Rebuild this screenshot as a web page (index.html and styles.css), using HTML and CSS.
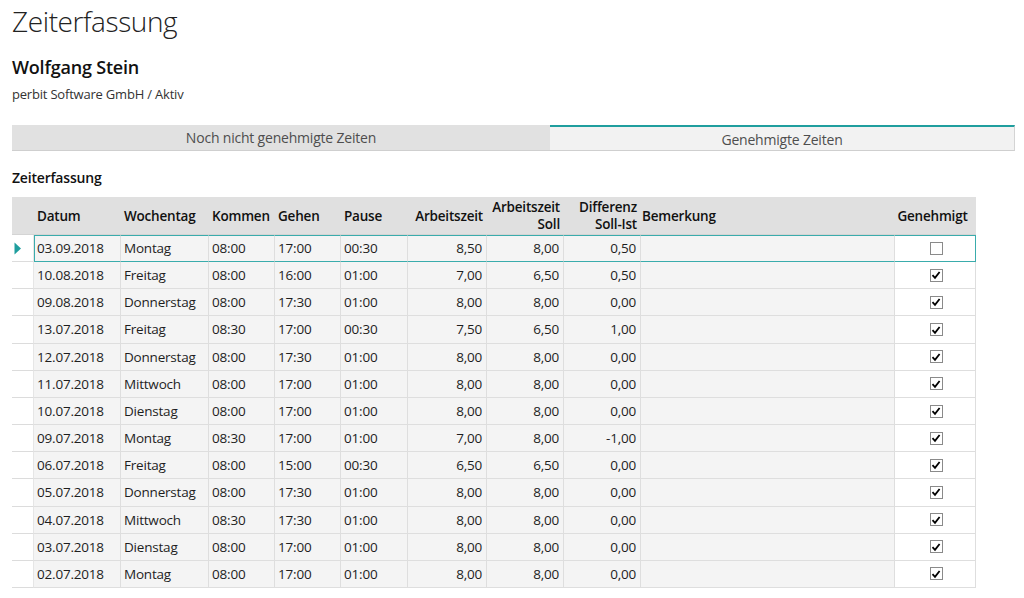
FILE: index.html
```html
<!DOCTYPE html>
<html lang="de">
<head>
<meta charset="utf-8">
<title>Zeiterfassung</title>
<link rel="stylesheet" href="styles.css">
</head>
<body>
<h1 class="title">Zeiterfassung</h1>
<div class="person">Wolfgang Stein</div>
<div class="company">perbit Software GmbH / Aktiv</div>

<div class="tabs">
  <div class="tab">Noch nicht genehmigte Zeiten</div>
  <div class="tab active">Genehmigte Zeiten</div>
</div>

<div class="section">Zeiterfassung</div>

<div class="grid">
  <div class="row head">
    <div class="c ind"></div>
    <div class="c">Datum</div>
    <div class="c">Wochentag</div>
    <div class="c">Kommen</div>
    <div class="c">Gehen</div>
    <div class="c">Pause</div>
    <div class="c num">Arbeitszeit</div>
    <div class="c num two">Arbeitszeit<br>Soll</div>
    <div class="c num two">Differenz<br>Soll-Ist</div>
    <div class="c bem">Bemerkung</div>
    <div class="c ctr">Genehmigt</div>
  </div>

  <div class="row sel">
    <div class="c ind"><svg width="8" height="13" viewBox="0 0 8 13"><path d="M0.5 0.5 L7 6.5 L0.5 12.5 Z" fill="#1f9e9e"/></svg></div>
    <div class="c first">03.09.2018</div><div class="c">Montag</div><div class="c">08:00</div><div class="c">17:00</div><div class="c">00:30</div>
    <div class="c num">8,50</div><div class="c num">8,00</div><div class="c num">0,50</div><div class="c"></div>
    <div class="c ctr chk last"><span class="box"></span></div>
  </div>

  <div class="row"><div class="c ind"></div><div class="c">10.08.2018</div><div class="c">Freitag</div><div class="c">08:00</div><div class="c">16:00</div><div class="c">01:00</div><div class="c num">7,00</div><div class="c num">6,50</div><div class="c num">0,50</div><div class="c"></div><div class="c ctr chk"><span class="box on"><svg width="10" height="10" viewBox="0 0 10 10"><path d="M1.5 5.2 L4 7.8 L8.6 2" fill="none" stroke="#000" stroke-width="1.8"/></svg></span></div></div>
  <div class="row"><div class="c ind"></div><div class="c">09.08.2018</div><div class="c">Donnerstag</div><div class="c">08:00</div><div class="c">17:30</div><div class="c">01:00</div><div class="c num">8,00</div><div class="c num">8,00</div><div class="c num">0,00</div><div class="c"></div><div class="c ctr chk"><span class="box on"><svg width="10" height="10" viewBox="0 0 10 10"><path d="M1.5 5.2 L4 7.8 L8.6 2" fill="none" stroke="#000" stroke-width="1.8"/></svg></span></div></div>
  <div class="row"><div class="c ind"></div><div class="c">13.07.2018</div><div class="c">Freitag</div><div class="c">08:30</div><div class="c">17:00</div><div class="c">00:30</div><div class="c num">7,50</div><div class="c num">6,50</div><div class="c num">1,00</div><div class="c"></div><div class="c ctr chk"><span class="box on"><svg width="10" height="10" viewBox="0 0 10 10"><path d="M1.5 5.2 L4 7.8 L8.6 2" fill="none" stroke="#000" stroke-width="1.8"/></svg></span></div></div>
  <div class="row"><div class="c ind"></div><div class="c">12.07.2018</div><div class="c">Donnerstag</div><div class="c">08:00</div><div class="c">17:30</div><div class="c">01:00</div><div class="c num">8,00</div><div class="c num">8,00</div><div class="c num">0,00</div><div class="c"></div><div class="c ctr chk"><span class="box on"><svg width="10" height="10" viewBox="0 0 10 10"><path d="M1.5 5.2 L4 7.8 L8.6 2" fill="none" stroke="#000" stroke-width="1.8"/></svg></span></div></div>
  <div class="row"><div class="c ind"></div><div class="c">11.07.2018</div><div class="c">Mittwoch</div><div class="c">08:00</div><div class="c">17:00</div><div class="c">01:00</div><div class="c num">8,00</div><div class="c num">8,00</div><div class="c num">0,00</div><div class="c"></div><div class="c ctr chk"><span class="box on"><svg width="10" height="10" viewBox="0 0 10 10"><path d="M1.5 5.2 L4 7.8 L8.6 2" fill="none" stroke="#000" stroke-width="1.8"/></svg></span></div></div>
  <div class="row"><div class="c ind"></div><div class="c">10.07.2018</div><div class="c">Dienstag</div><div class="c">08:00</div><div class="c">17:00</div><div class="c">01:00</div><div class="c num">8,00</div><div class="c num">8,00</div><div class="c num">0,00</div><div class="c"></div><div class="c ctr chk"><span class="box on"><svg width="10" height="10" viewBox="0 0 10 10"><path d="M1.5 5.2 L4 7.8 L8.6 2" fill="none" stroke="#000" stroke-width="1.8"/></svg></span></div></div>
  <div class="row"><div class="c ind"></div><div class="c">09.07.2018</div><div class="c">Montag</div><div class="c">08:30</div><div class="c">17:00</div><div class="c">01:00</div><div class="c num">7,00</div><div class="c num">8,00</div><div class="c num">-1,00</div><div class="c"></div><div class="c ctr chk"><span class="box on"><svg width="10" height="10" viewBox="0 0 10 10"><path d="M1.5 5.2 L4 7.8 L8.6 2" fill="none" stroke="#000" stroke-width="1.8"/></svg></span></div></div>
  <div class="row"><div class="c ind"></div><div class="c">06.07.2018</div><div class="c">Freitag</div><div class="c">08:00</div><div class="c">15:00</div><div class="c">00:30</div><div class="c num">6,50</div><div class="c num">6,50</div><div class="c num">0,00</div><div class="c"></div><div class="c ctr chk"><span class="box on"><svg width="10" height="10" viewBox="0 0 10 10"><path d="M1.5 5.2 L4 7.8 L8.6 2" fill="none" stroke="#000" stroke-width="1.8"/></svg></span></div></div>
  <div class="row"><div class="c ind"></div><div class="c">05.07.2018</div><div class="c">Donnerstag</div><div class="c">08:00</div><div class="c">17:30</div><div class="c">01:00</div><div class="c num">8,00</div><div class="c num">8,00</div><div class="c num">0,00</div><div class="c"></div><div class="c ctr chk"><span class="box on"><svg width="10" height="10" viewBox="0 0 10 10"><path d="M1.5 5.2 L4 7.8 L8.6 2" fill="none" stroke="#000" stroke-width="1.8"/></svg></span></div></div>
  <div class="row"><div class="c ind"></div><div class="c">04.07.2018</div><div class="c">Mittwoch</div><div class="c">08:30</div><div class="c">17:30</div><div class="c">01:00</div><div class="c num">8,00</div><div class="c num">8,00</div><div class="c num">0,00</div><div class="c"></div><div class="c ctr chk"><span class="box on"><svg width="10" height="10" viewBox="0 0 10 10"><path d="M1.5 5.2 L4 7.8 L8.6 2" fill="none" stroke="#000" stroke-width="1.8"/></svg></span></div></div>
  <div class="row"><div class="c ind"></div><div class="c">03.07.2018</div><div class="c">Dienstag</div><div class="c">08:00</div><div class="c">17:00</div><div class="c">01:00</div><div class="c num">8,00</div><div class="c num">8,00</div><div class="c num">0,00</div><div class="c"></div><div class="c ctr chk"><span class="box on"><svg width="10" height="10" viewBox="0 0 10 10"><path d="M1.5 5.2 L4 7.8 L8.6 2" fill="none" stroke="#000" stroke-width="1.8"/></svg></span></div></div>
  <div class="row"><div class="c ind"></div><div class="c">02.07.2018</div><div class="c">Montag</div><div class="c">08:00</div><div class="c">17:00</div><div class="c">01:00</div><div class="c num">8,00</div><div class="c num">8,00</div><div class="c num">0,00</div><div class="c"></div><div class="c ctr chk"><span class="box on"><svg width="10" height="10" viewBox="0 0 10 10"><path d="M1.5 5.2 L4 7.8 L8.6 2" fill="none" stroke="#000" stroke-width="1.8"/></svg></span></div></div>
</div>
</body>
</html>
```

FILE: styles.css
```css
* { box-sizing: border-box; }
html, body { margin: 0; padding: 0; background: #fff; }
body {
  padding: 0 12px;
  font-family: "Open Sans", "Noto Sans", "Liberation Sans", sans-serif;
  color: #1e1e1e;
  overflow: hidden;
  height: 598px;
}
.title {
  margin: 0;
  padding-top: 1px;
  font-size: 28px;
  font-weight: 300;
  line-height: 40px;
  letter-spacing: -0.4px;
  color: #222;
}
.person {
  margin-top: 14px;
  font-size: 18px;
  font-weight: 600;
  line-height: 24px;
  color: #111;
  letter-spacing: -0.2px;
}
.company {
  margin-top: 6px;
  font-size: 13px;
  line-height: 18px;
  color: #333;
  letter-spacing: -0.2px;
}
.tabs {
  margin-top: 22px;
  display: flex;
  width: 1003px;
  height: 26px;
}
.tab {
  flex: 0 0 538px;
  background: #e1e1e1;
  border-bottom: 1px solid #cfcfcf;
  text-align: center;
  font-size: 14px;
  line-height: 25px;
  color: #4e4e4e;
  letter-spacing: -0.2px;
}
.tab.active {
  flex: 1 1 auto;
  background: #f2f2f2;
  border-top: 2px solid #1f9e9e;
  border-right: 1px solid #d4d4d4;
  border-bottom: 1px solid #cfcfcf;
  line-height: 23px;
  padding-top: 1px;
}
.section {
  margin-top: 17px;
  font-size: 14px;
  font-weight: 600;
  line-height: 20px;
  color: #111;
  letter-spacing: -0.2px;
}
.grid {
  margin-top: 9px;
  width: 964px;
  font-size: 13.5px;
  letter-spacing: -0.2px;
}
.row {
  display: grid;
  grid-template-columns: 22px 87px 88px 66px 66px 67px 79px 77px 77px 254px 81px;
  height: 27.17px;
}
.c {
  background: #f4f4f4;
  border-right: 1px solid #dedede;
  border-bottom: 1px solid #dedede;
  padding: 0 3px;
  line-height: 26px;
  white-space: nowrap;
  color: #1e1e1e;
}
.c.num { text-align: right; padding-right: 4px; }
.c.ctr { text-align: center; }
.c.ind {
  background: #fff;
  border-right: 1px solid #e6e6e6;
  border-bottom: 1px solid #dcdcdc;
  display: flex;
  align-items: center;
  padding: 0 0 0 2px;
}
.c.chk {
  background: #fff;
  display: flex;
  align-items: center;
  justify-content: center;
  padding: 0 0 0 2px;
}
.row.head { height: 38px; }
.row.head .c {
  background: #e0e0e0;
  border-right: none;
  border-bottom: 1px solid #d4d4d4;
  font-weight: 600;
  color: #111;
  display: flex;
  align-items: center;
  line-height: 17px;
  padding-top: 1px;
}
.row.head .c.num { justify-content: flex-end; text-align: right; }
.row.head .c.ctr { justify-content: center; padding-left: 0; padding-right: 6px; }
.row.head .c.two { padding-top: 0; }
.row.head .c.bem { padding-left: 1px; }
.row.sel .c:not(.ind) {
  border-top: 1px solid #3aacac;
  border-bottom: 1px solid #3aacac;
  line-height: 25px;
}
.row.sel .c.ind { border-bottom-color: #dcdcdc; }
.row.sel .c.first { border-left: 1px solid #3aacac; padding-left: 2px; }
.row.sel .c.last { border-right: 1px solid #3aacac; }
.box {
  display: inline-flex;
  width: 13px;
  height: 13px;
  border: 1px solid #8a8a8a;
  background: #fff;
  align-items: center;
  justify-content: center;
}
.box svg { display: block; }
```
